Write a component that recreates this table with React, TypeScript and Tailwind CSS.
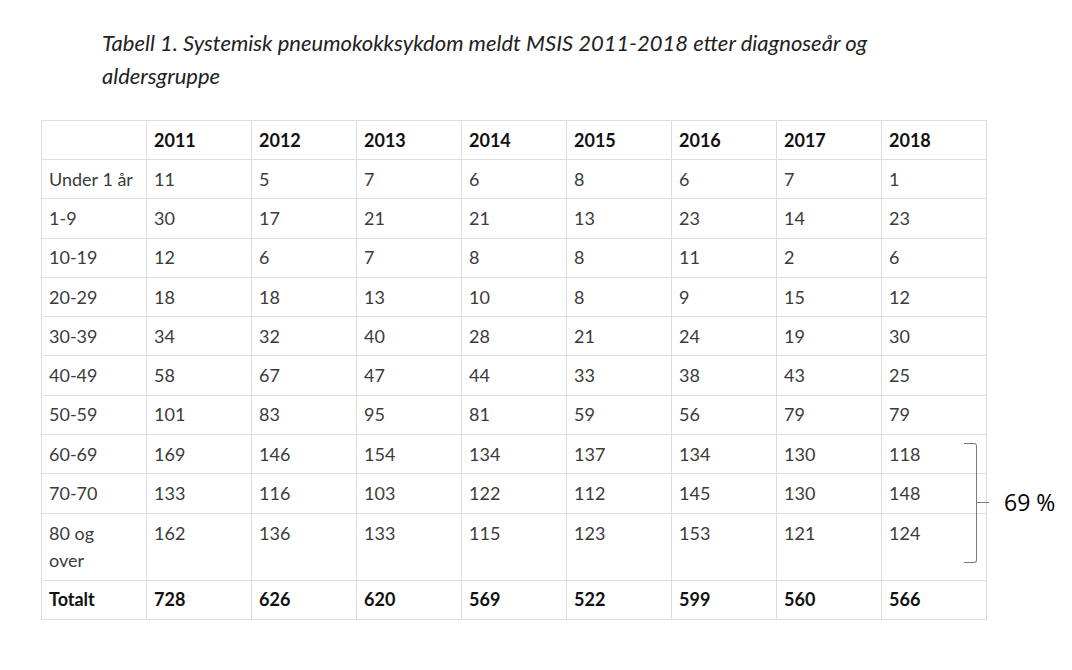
const years = ['2011', '2012', '2013', '2014', '2015', '2016', '2017', '2018'];

const rows: { label: React.ReactNode; values: number[]; tall?: boolean }[] = [
  { label: 'Under 1 år', values: [11, 5, 7, 6, 8, 6, 7, 1] },
  { label: '1-9', values: [30, 17, 21, 21, 13, 23, 14, 23] },
  { label: '10-19', values: [12, 6, 7, 8, 8, 11, 2, 6] },
  { label: '20-29', values: [18, 18, 13, 10, 8, 9, 15, 12] },
  { label: '30-39', values: [34, 32, 40, 28, 21, 24, 19, 30] },
  { label: '40-49', values: [58, 67, 47, 44, 33, 38, 43, 25] },
  { label: '50-59', values: [101, 83, 95, 81, 59, 56, 79, 79] },
  { label: '60-69', values: [169, 146, 154, 134, 137, 134, 130, 118] },
  { label: '70-70', values: [133, 116, 103, 122, 112, 145, 130, 148] },
  { label: <>80 og<br />over</>, values: [162, 136, 133, 115, 123, 153, 121, 124], tall: true },
];

const totals = [728, 626, 620, 569, 522, 599, 560, 566];

const cell = 'border border-[#dedede] w-[105px] pl-[7px] pr-2 align-middle';

export default function App() {
  return (
    <div className="relative h-[670px] w-[1072px] overflow-hidden bg-white font-['Lato',sans-serif] text-[#3b3b3b]">
      {/* caption */}
      <p className="pl-[102px] pt-[26px] text-[22px] italic leading-[33px] text-[#222]">
        Tabell 1. Systemisk pneumokokksykdom meldt MSIS 2011-2018 etter diagnoseår og
        <br />
        aldersgruppe
      </p>

      <div className="relative ml-[41px] mt-[28px] w-[945px]">
        <table className="w-[945px] table-fixed border-collapse text-[18px]">
          <thead>
            <tr className="h-[39px]">
              <th className={cell} />
              {years.map((y) => (
                <th key={y} className={`${cell} text-left font-bold text-[#111]`}>
                  {y}
                </th>
              ))}
            </tr>
          </thead>
          <tbody>
            {rows.map((r, i) => (
              <tr key={i} className={r.tall ? 'h-[67px]' : 'h-[39.3px]'}>
                <td className={`${cell} ${r.tall ? 'align-top pt-[6px] leading-[27px]' : ''}`}>{r.label}</td>
                {r.values.map((v, j) => (
                  <td key={j} className={`${cell} ${r.tall ? 'align-top pt-[6px] leading-[27px]' : ''}`}>
                    {v}
                  </td>
                ))}
              </tr>
            ))}
            <tr className="h-[39px] font-bold text-[#111]">
              <td className={cell}>Totalt</td>
              {totals.map((t, j) => (
                <td key={j} className={cell}>
                  {t}
                </td>
              ))}
            </tr>
          </tbody>
        </table>

        {/* bracket over the last three age groups */}
        <div className="absolute left-[923px] top-[323px] h-[120px] w-[13px] rounded-r-[3px] border-y border-r border-[#7a7a7a]" />
        <div className="absolute left-[936px] top-[382px] h-px w-[12px] bg-[#7a7a7a]" />
        <span className="absolute left-[963px] top-[365px] whitespace-nowrap font-['Open_Sans',sans-serif] text-[23px] text-black">
          69 %
        </span>
      </div>
    </div>
  );
}
